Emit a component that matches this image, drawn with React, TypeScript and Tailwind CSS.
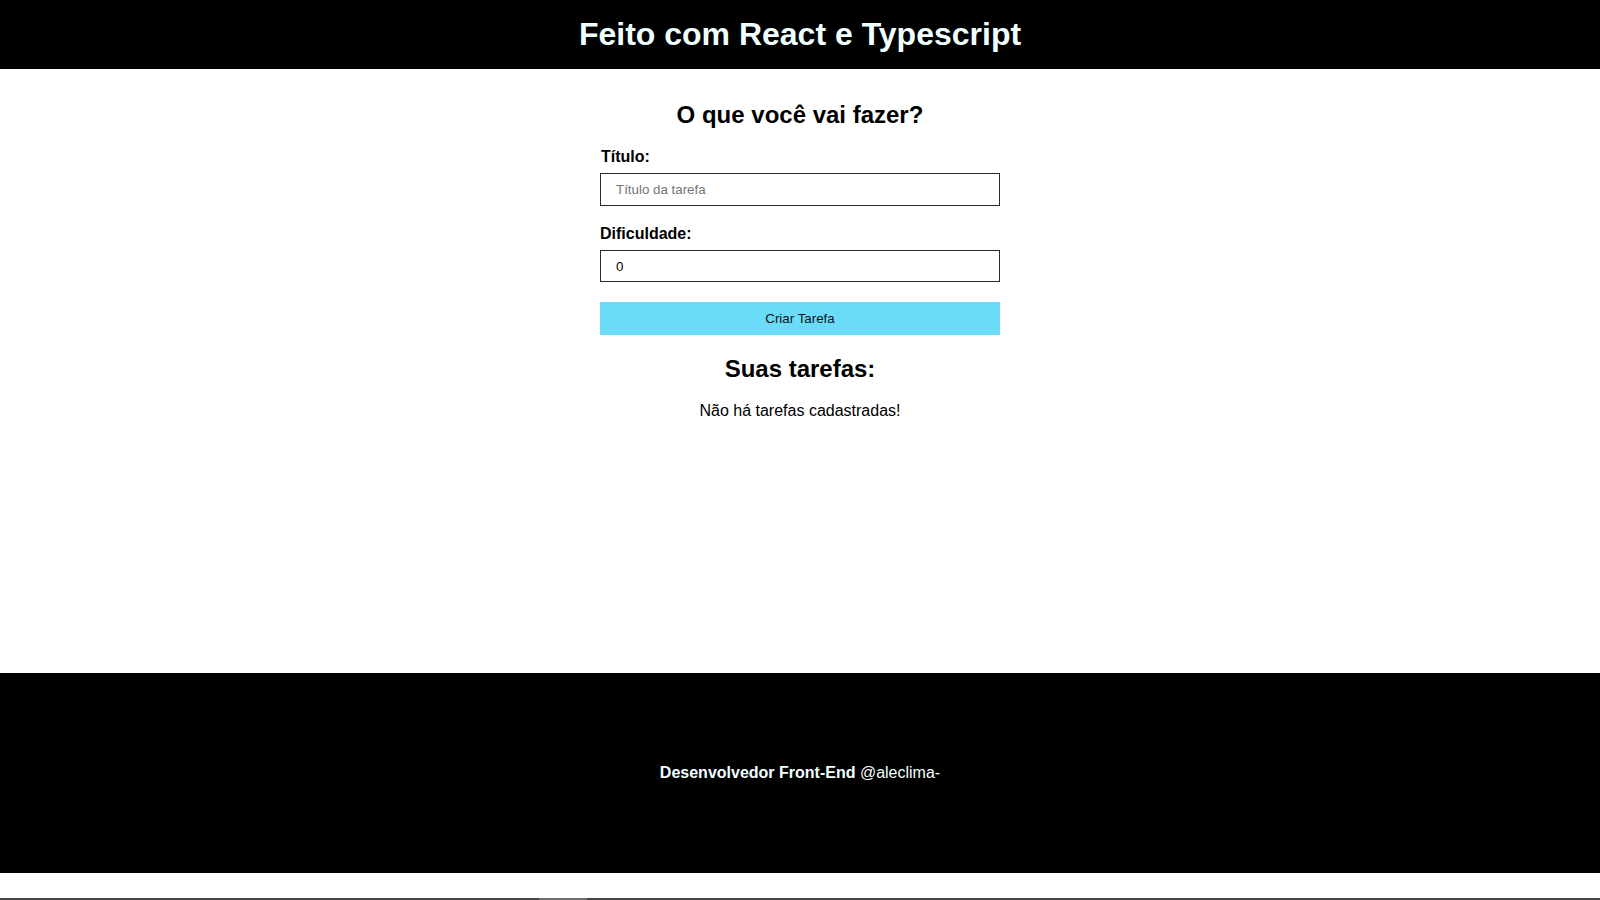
import { useState } from "react";

interface Task {
  id: number;
  title: string;
  difficulty: number;
}

export default function App() {
  const [title, setTitle] = useState("");
  const [difficulty, setDifficulty] = useState(0);
  const [tasks, setTasks] = useState<Task[]>([]);

  const handleSubmit = (e: React.FormEvent) => {
    e.preventDefault();
    if (!title) return;
    setTasks([...tasks, { id: Date.now(), title, difficulty }]);
    setTitle("");
    setDifficulty(0);
  };

  return (
    <div className="min-h-[900px] bg-white font-['Liberation_Sans',Arial,sans-serif] text-black">
      {/* Header */}
      <header className="bg-black h-[69px] pt-[16px] text-center">
        <h1 className="text-[32px] leading-[37px] font-bold text-[#f0ffff]">Feito com React e Typescript</h1>
      </header>

      {/* Main */}
      <main className="h-[604px] flex flex-col items-center pt-[32px]">
        <h2 className="text-[24px] leading-[28px] font-bold">O que você vai fazer?</h2>

        <form onSubmit={handleSubmit} className="w-[400px] flex flex-col mt-[19px]">
          <label htmlFor="title" className="text-[16px] leading-[18px] font-bold pl-[1px]">
            Título:
          </label>
          <input
            id="title"
            type="text"
            placeholder="Título da tarefa"
            value={title}
            onChange={(e) => setTitle(e.target.value)}
            className="mt-[7px] h-[33px] border border-[#2b2b2b] px-[15px] text-[13.33px] placeholder:text-[#757575] outline-none"
          />

          <label htmlFor="difficulty" className="mt-[19px] text-[16px] leading-[18px] font-bold">
            Dificuldade:
          </label>
          <input
            id="difficulty"
            type="number"
            value={difficulty}
            onChange={(e) => setDifficulty(Number(e.target.value))}
            className="mt-[7px] h-[32px] border border-[#2b2b2b] px-[15px] text-[13.33px] outline-none"
          />

          <button type="submit" className="mt-[20px] h-[33px] bg-[#6adcf9] text-[13.33px] text-[#111]">
            Criar Tarefa
          </button>
        </form>

        <h2 className="mt-[20px] text-[24px] leading-[28px] font-bold">Suas tarefas:</h2>
        {tasks.length === 0 ? (
          <p className="mt-[19px] text-[16px] leading-[18px]">Não há tarefas cadastradas!</p>
        ) : (
          <ul className="mt-[19px] w-[400px]">
            {tasks.map((task) => (
              <li key={task.id} className="text-[16px]">
                {task.title} - {task.difficulty}
              </li>
            ))}
          </ul>
        )}
      </main>

      {/* Footer */}
      <footer className="h-[200px] bg-black flex items-center justify-center">
        <p className="text-[16px] text-[#f0ffff]">
          <span className="font-bold">Desenvolvedor Front-End</span> @aleclima-
        </p>
      </footer>

      <div className="h-[25px]" />
      <div className="h-[2px] bg-[#474747] flex">
        <div className="ml-[539px] w-[48px] bg-[#6e6e6e]" />
      </div>
    </div>
  );
}
